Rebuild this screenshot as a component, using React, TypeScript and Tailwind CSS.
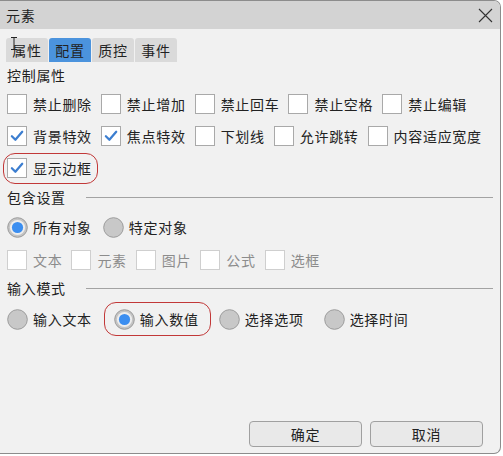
import React from 'react';

const font = { fontFamily: '"Noto Sans CJK SC", "Noto Sans", sans-serif' };

function CheckBox({ checked = false, disabled = false }: { checked?: boolean; disabled?: boolean }) {
  return (
    <span
      className={`w-[20px] h-[20px] shrink-0 border bg-white flex items-center justify-center ${
        disabled ? 'border-[#cfcfcf]' : 'border-[#a9a9a9]'
      }`}
    >
      {checked && (
        <svg width="20" height="20" viewBox="0 0 20 20">
          <path d="M4.3 10.3 L8.2 14.2 L15.8 5.3" stroke="#3c7ed0" strokeWidth="2.5" fill="none" strokeLinecap="round" strokeLinejoin="round" />
        </svg>
      )}
    </span>
  );
}

function Radio({ checked = false }: { checked?: boolean }) {
  return (
    <svg width="21" height="21" viewBox="0 0 21 21" className="shrink-0">
      {checked ? (
        <>
          <circle cx="10.5" cy="10.5" r="9.8" fill="#c4c4c4" stroke="#9b9b9b" strokeWidth="1" />
          <circle cx="10.5" cy="10.5" r="7.6" fill="#ededed" />
          <circle cx="10.5" cy="10.5" r="5.6" fill="#3b8ef0" />
        </>
      ) : (
        <circle cx="10.5" cy="10.5" r="9.8" fill="#c8c8c8" stroke="#9b9b9b" strokeWidth="1" />
      )}
    </svg>
  );
}

function Check({ label, checked, disabled }: { label: string; checked?: boolean; disabled?: boolean }) {
  return (
    <div className="flex items-center gap-[6px]">
      <CheckBox checked={checked} disabled={disabled} />
      <span className={`text-[14px] tracking-[0.7px] leading-[20px] ${disabled ? 'text-[#8c8c8c]' : 'text-[#222]'}`}>
        {label}
      </span>
    </div>
  );
}

function RadioItem({ label, checked }: { label: string; checked?: boolean }) {
  return (
    <div className="flex items-center gap-[5px]">
      <Radio checked={checked} />
      <span className="text-[14px] tracking-[0.7px] leading-[20px] text-[#222]">{label}</span>
    </div>
  );
}

function SectionTitle({ title, line }: { title: string; line?: boolean }) {
  return (
    <div className="flex items-center h-[20px] pr-[7px]">
      <span className="text-[14px] tracking-[0.7px] leading-[20px] text-[#222]">{title}</span>
      {line && <div className="flex-1 h-px bg-[#a3a3a3] ml-[20px]" />}
    </div>
  );
}

export default function App() {
  const tabs = ['属性', '配置', '质控', '事件'];

  return (
    <div style={font} className="relative w-[501px] h-[454px] bg-[#f1f1f1] border-t border-r border-b border-[#8c8c8c] rounded-tr-[7px] rounded-br-[7px] overflow-hidden flex flex-col">
      <div className="h-[28px] shrink-0 bg-[#d3d3d3] flex items-center justify-between pl-[6px] pr-[7px]">
        <span className="text-[14px] tracking-[0.7px] text-[#222]">元素</span>
        <svg width="15" height="15" viewBox="0 0 15 15">
          <path d="M1 1 L14 14 M14 1 L1 14" stroke="#333" strokeWidth="1.1" />
        </svg>
      </div>

      <div className="flex gap-[1px] pl-[6px] mt-[9px]">
        {tabs.map((t, i) => (
          <div
            key={t}
            className={`w-[42px] h-[24px] flex items-center justify-center rounded-t-[3px] text-[14px] tracking-[0.7px] text-[#222] ${
              i === 1 ? 'bg-[#4b93dd]' : 'bg-[#dadada]'
            }`}
          >
            {t}
          </div>
        ))}
      </div>

      <svg width="8" height="13" viewBox="0 0 8 13" className="absolute left-[10px] top-[36px]">
        <path d="M1 0.5 H7 M4 0.5 V12.5 M1 12.5 H7" stroke="#222" strokeWidth="1" fill="none" />
      </svg>

      <div className="pl-[7px] flex flex-col flex-1">
        <div className="mt-[3px]">
          <SectionTitle title="控制属性" />
        </div>

        <div className="mt-[3px] h-[32px] flex items-center gap-[9px]">
          <Check label="禁止删除" />
          <Check label="禁止增加" />
          <Check label="禁止回车" />
          <Check label="禁止空格" />
          <Check label="禁止编辑" />
        </div>
        <div className="h-[32px] flex items-center gap-[9px]">
          <Check label="背景特效" checked />
          <Check label="焦点特效" checked />
          <Check label="下划线" />
          <Check label="允许跳转" />
          <Check label="内容适应宽度" />
        </div>
        <div className="h-[32px] flex items-center">
          <div className="-ml-[4px] h-[31px] w-[95px] pl-[3px] border border-[#c23838] rounded-[12px] flex items-center">
            <Check label="显示边框" checked />
          </div>
        </div>

        <div className="mt-[3px]">
          <SectionTitle title="包含设置" line />
        </div>

        <div className="mt-[3px] h-[34px] flex items-center gap-[11px]">
          <RadioItem label="所有对象" checked />
          <RadioItem label="特定对象" />
        </div>

        <div className="h-[32px] flex items-center gap-[9px]">
          <Check label="文本" disabled />
          <Check label="元素" disabled />
          <Check label="图片" disabled />
          <Check label="公式" disabled />
          <Check label="选框" disabled />
        </div>

        <div className="mt-[2px]">
          <SectionTitle title="输入模式" line />
        </div>

        <div className="mt-[4px] h-[34px] flex items-center">
          <RadioItem label="输入文本" />
          <div className="ml-[12px] h-[34px] w-[107px] pl-[9px] border border-[#c23838] rounded-[12px] flex items-center">
            <RadioItem label="输入数值" checked />
          </div>
          <div className="ml-[8px]">
            <RadioItem label="选择选项" />
          </div>
          <div className="ml-[20px]">
            <RadioItem label="选择时间" />
          </div>
        </div>

        <div className="mt-auto flex justify-end gap-[8px] pr-[17px] pb-[6px]">
          <button className="w-[113px] h-[26px] bg-[#e9e9e9] border border-[#a0a0a0] rounded-[4px] text-[14px] tracking-[0.7px] text-[#222]">
            确定
          </button>
          <button className="w-[113px] h-[26px] bg-[#e9e9e9] border border-[#a0a0a0] rounded-[4px] text-[14px] tracking-[0.7px] text-[#222]">
            取消
          </button>
        </div>
      </div>
    </div>
  );
}
